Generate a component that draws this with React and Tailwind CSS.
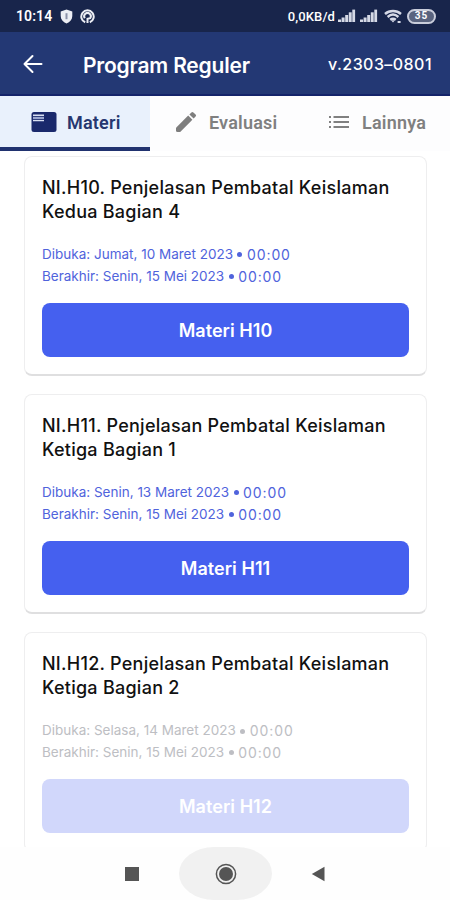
const lessons = [
  {
    title: ["NI.H10. Penjelasan Pembatal Keislaman", "Kedua Bagian 4"],
    opened: "Dibuka: Jumat, 10 Maret 2023",
    closed: "Berakhir: Senin, 15 Mei 2023",
    button: "Materi H10",
    active: true,
  },
  {
    title: ["NI.H11. Penjelasan Pembatal Keislaman", "Ketiga Bagian 1"],
    opened: "Dibuka: Senin, 13 Maret 2023",
    closed: "Berakhir: Senin, 15 Mei 2023",
    button: "Materi H11",
    active: true,
  },
  {
    title: ["NI.H12. Penjelasan Pembatal Keislaman", "Ketiga Bagian 2"],
    opened: "Dibuka: Selasa, 14 Maret 2023",
    closed: "Berakhir: Senin, 15 Mei 2023",
    button: "Materi H12",
    active: false,
  },
];

function SignalIcon() {
  return (
    <svg width="18" height="14" viewBox="0 0 18 14" fill="#d5d9e6">
      <rect x="0" y="10.5" width="3.1" height="2.5" />
      <rect x="3.6" y="8.5" width="3" height="4.5" />
      <rect x="7.2" y="6" width="3" height="7" />
      <rect x="10.8" y="3.3" width="2.9" height="9.7" />
      <rect x="14.3" y="0.6" width="2.8" height="12.4" />
    </svg>
  );
}

function StatusBar() {
  return (
    <div className="flex h-8 shrink-0 items-center bg-[#18254b] pr-[14px] pl-4 text-white">
      <span className="w-[37px] pt-px font-[Roboto,sans-serif] text-[14px] font-semibold tracking-[0.1px] whitespace-nowrap">
        10:14
      </span>
      <svg className="ml-[7px]" width="13" height="15" viewBox="0 0 13 15">
        <path d="M6.5 0.5 12.3 2.6V7c0 3.4-2.3 6-5.8 7.5C3 13 .7 10.4.7 7V2.6Z" fill="#eceef4" />
        <path d="M6.5 4.2v6" stroke="#8a91a8" strokeWidth="2" />
      </svg>
      <svg className="ml-[7px]" width="15" height="15" viewBox="0 0 15 15">
        <path
          d="M5.2 13.3a6.2 6.2 0 1 1 4.6 0"
          fill="none"
          stroke="#eceef4"
          strokeWidth="2"
        />
        <path
          d="M4.8 9.2A3.3 3.3 0 1 1 10.2 9.2L7.5 9.8V14"
          fill="none"
          stroke="#eceef4"
          strokeWidth="2"
        />
      </svg>
      <span className="ml-auto pt-px font-[Roboto,sans-serif] text-[13px] font-medium tracking-[0.1px] whitespace-nowrap">
        0,0KB/d
      </span>
      <div className="ml-[3px] flex gap-1">
        <SignalIcon />
        <SignalIcon />
      </div>
      <svg className="ml-[6px]" width="18" height="15" viewBox="0 0 18 15" fill="none" stroke="#d5d9e6" strokeWidth="2.4">
        <path d="M1 5C5.4 1 12.6 1 17 5" />
        <path d="M3.6 8C7 5 11 5 14.4 8" />
        <path d="M6.2 10.8Q9 8.6 11.8 10.8" />
        <path d="M7 11.2h4L9 13.6Z" fill="#d5d9e6" stroke="none" />
        <path d="M13.6 13h3" strokeWidth="2" />
      </svg>
      <div className="ml-[5px] flex h-[15px] w-[29px] items-center justify-center rounded-full border-2 border-[#c9cddb] bg-[#59637f]">
        <span className="font-[Roboto,sans-serif] text-[10px] leading-none font-bold tracking-[1px]">35</span>
      </div>
    </div>
  );
}

function Header() {
  return (
    <header className="flex h-16 shrink-0 items-center border-b-2 border-[#14246a] bg-[#233874] pt-[2px] pr-[18px] pl-[22px] text-white">
      <svg width="22" height="20" viewBox="0 0 22 20" fill="none" stroke="white" strokeWidth="2" strokeLinecap="round" strokeLinejoin="round">
        <path d="M19.5 10H2.5M10.5 2 2.5 10l8 8" />
      </svg>
      <h1 className="ml-[39px] pt-1 text-[21px] font-semibold tracking-[-0.2px] whitespace-nowrap">
        Program Reguler
      </h1>
      <span className="ml-auto text-[16px] font-medium tracking-[0.45px] whitespace-nowrap">
        v.2303–0801
      </span>
    </header>
  );
}

function Tabs() {
  return (
    <nav className="flex h-[55px] shrink-0 bg-[#fdfdfe] font-[Roboto,sans-serif] text-[18px] font-semibold text-[#808080]">
      <div className="flex w-[150px] items-center border-b-4 border-[#20326f] bg-[#e9f1fc] pt-px pl-[31px] text-[#263770]">
        <svg width="26" height="22" viewBox="0 0 26 22">
          <rect x="0.5" y="1" width="25" height="20" rx="2.5" fill="#1a296c" />
          <path d="M2 4.3h11M2 9.6h11" stroke="#d9e0f2" strokeWidth="1.4" />
          <path d="M2 7h11" stroke="#9aa6cf" strokeWidth="2.4" />
        </svg>
        <span className="ml-[10px] tracking-[0.2px]">Materi</span>
      </div>
      <div className="flex w-[150px] items-center pt-px pb-1 pl-[25px]">
        <svg width="22" height="22" viewBox="0 0 22 22" fill="#7e7e7e">
          <path d="M1 16.8 13.2 4.6l4.2 4.2L5.2 21H2.5Q1 21 1 19.5Z" />
          <path d="m14.4 3.4 2-2a1.4 1.4 0 0 1 2 0l2.2 2.2a1.4 1.4 0 0 1 0 2l-2 2Z" />
        </svg>
        <span className="ml-[12px] tracking-[0.2px]">Evaluasi</span>
      </div>
      <div className="flex w-[150px] items-center pt-px pb-1 pl-[28px]">
        <svg width="22" height="16" viewBox="0 0 22 16" stroke="#808080" strokeWidth="1.8">
          <path d="M1 3h2M1 8h2M1 13h2M5.5 3H21M5.5 8H21M5.5 13H21" />
        </svg>
        <span className="ml-[12px] tracking-[0.2px]">Lainnya</span>
      </div>
    </nav>
  );
}

function DateRow({ text }) {
  return (
    <p className="flex items-center whitespace-nowrap">
      {text}
      <span className="mx-[4.5px] size-[5px] rounded-full bg-current" />
      <span className="text-[14px] tracking-[0.9px]">00:00</span>
    </p>
  );
}

function LessonCard({ lesson }) {
  return (
    <article className="h-[220px] shrink-0 rounded-lg border border-b-2 border-[#eeeeef] border-b-[#dfdfe0] bg-white px-[17px] pt-[19px]">
      <h2 className="text-[18px] leading-6 font-medium tracking-[0.26px] whitespace-nowrap text-[#111]">
        {lesson.title[0]}
        <br />
        {lesson.title[1]}
      </h2>
      <div
        className={`mt-5 text-[13.5px] leading-[21.5px] ${
          lesson.active ? "text-[#5063dc]" : "text-[#bdbec3]"
        }`}
      >
        <DateRow text={lesson.opened} />
        <DateRow text={lesson.closed} />
      </div>
      <button
        className={`mt-4 block h-[54px] w-full rounded-lg text-[18px] font-semibold tracking-[0.05px] text-white ${
          lesson.active ? "bg-[#4560ef]" : "bg-[#d1d7fb]"
        }`}
      >
        {lesson.button}
      </button>
    </article>
  );
}

function NavigationBar() {
  return (
    <footer className="flex h-[53px] shrink-0 items-center bg-[#fefefe] pl-[85px]">
      <div className="flex w-[94px] justify-center">
        <div className="size-[14px] bg-[#555]" />
      </div>
      <div className="flex h-[53px] w-[93px] items-center justify-center rounded-[36px/27px] bg-[#f1f1f1]">
        <svg width="22" height="22" viewBox="0 0 22 22">
          <circle cx="11" cy="11" r="9.6" fill="none" stroke="#555" strokeWidth="1.5" />
          <circle cx="11" cy="11" r="7" fill="#555" />
        </svg>
      </div>
      <div className="flex w-[91px] justify-center">
        <svg width="14" height="16" viewBox="0 0 14 16">
          <path d="M13.5 0.8v14.4L0.8 8Z" fill="#555" />
        </svg>
      </div>
    </footer>
  );
}

export default function App() {
  return (
    <div className="flex h-[900px] w-[450px] flex-col overflow-hidden bg-white font-[Inter,sans-serif]">
      <StatusBar />
      <Header />
      <Tabs />
      <main className="flex min-h-0 flex-1 flex-col gap-[18.2px] overflow-hidden bg-white pt-[5px] pr-[23px] pl-6">
        {lessons.map((lesson) => (
          <LessonCard key={lesson.button} lesson={lesson} />
        ))}
      </main>
      <NavigationBar />
    </div>
  );
}
